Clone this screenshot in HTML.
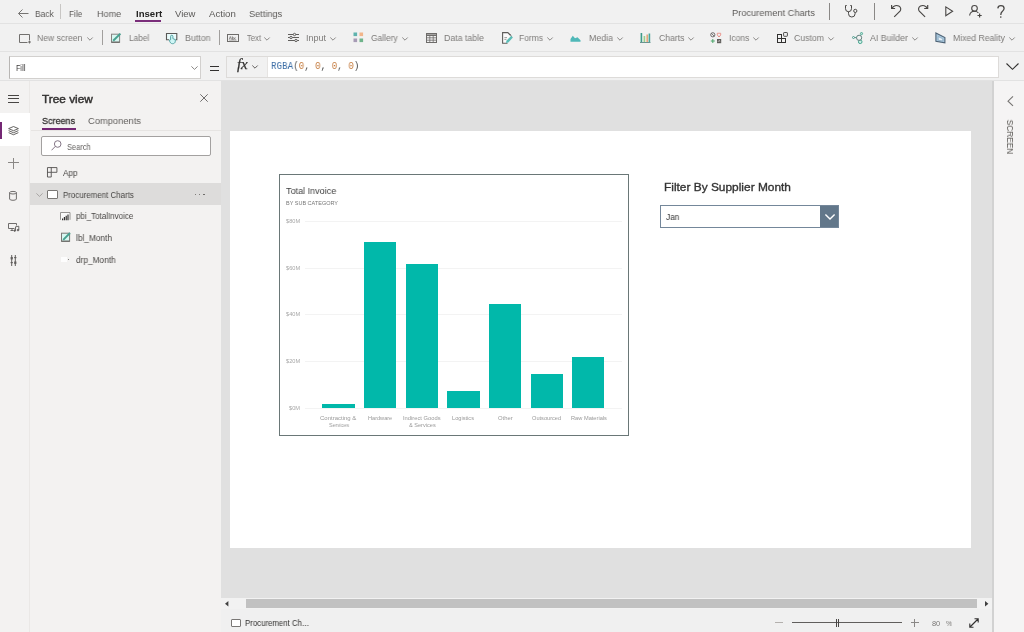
<!DOCTYPE html>
<html>
<head>
<meta charset="utf-8">
<title>Power Apps</title>
<style>
*{box-sizing:border-box;margin:0;padding:0}
html,body{width:1024px;height:632px;overflow:hidden;background:#f1f1f1;font-family:"Liberation Sans",sans-serif;color:#444}
.abs{position:absolute}
.t{position:absolute;white-space:nowrap;transform-origin:0 50%;will-change:transform;filter:blur(0.3px)}
#top{position:absolute;left:0;top:0;width:1024px;height:24px;background:#f1f1f1;border-bottom:1px solid #e2e2e2}
#tool{position:absolute;left:0;top:24px;width:1024px;height:28px;background:#f1f1f1;border-bottom:1px solid #e2e2e2}
#fbar{position:absolute;left:0;top:52px;width:1024px;height:29px;background:#f1f1f1;border-bottom:1px solid #e2e2e2}
#rail{position:absolute;left:0;top:81px;width:30px;height:551px;background:#f3f2f1;border-right:1px solid #eae8e6}
#tree{position:absolute;left:30px;top:81px;width:191px;height:551px;background:#f3f2f1}
#canvas{position:absolute;left:221px;top:81px;width:773px;height:517px;background:#e0e0e0}
#screen{position:absolute;left:230px;top:131px;width:741px;height:417px;background:#fff}
#right{position:absolute;left:994px;top:81px;width:30px;height:551px;background:#f5f4f4}
#hscroll{position:absolute;left:221px;top:598px;width:771px;height:11px;background:#f2f2f2}
#bottom{position:absolute;left:221px;top:609px;width:773px;height:23px;background:#f0f0f0}
#rb{position:absolute;left:992px;top:81px;width:2px;height:551px;background:#d2d2d2}
.vd{position:absolute;width:1px;background:#8a8886}
svg{position:absolute;overflow:visible;filter:blur(0.3px)}
.bar{position:absolute;background:#01b8aa}
.grid{position:absolute;left:305px;width:317px;height:1px;background:#f3f3f3}
.chev{fill:none;stroke:#8a8886;stroke-width:1}
</style>
</head>
<body>
<div id="top"></div>
<div id="tool"></div>
<div id="fbar"></div>
<div id="rail"></div>
<div id="tree"></div>
<div id="canvas"></div>
<div id="screen"></div>
<div id="right"></div>
<div id="hscroll"></div>
<div id="bottom"></div>
<div id="rb"></div>

<!-- ===== top bar icons ===== -->
<svg style="left:18px;top:9px" width="11" height="9" viewBox="0 0 11 9" fill="none" stroke="#767472" stroke-width="1"><path d="M0.5 4.5H10.5M4.5 0.5L0.5 4.5L4.5 8.5"/></svg>
<div class="vd" style="left:60px;top:4px;height:15px;background:#c8c6c4"></div>
<div class="abs" style="left:135.2px;top:20.2px;width:26px;height:1.7px;background:#7a2e7a"></div>
<div class="vd" style="left:828.5px;top:3px;height:17px"></div>
<div class="vd" style="left:873.6px;top:3px;height:17px"></div>
<!-- stethoscope -->
<svg style="left:844px;top:5px" width="14" height="13" viewBox="0 0 14 13" fill="none" stroke="#484644" stroke-width="1"><path d="M2.7 0.5H1.5V3.7a3 3 0 0 0 6 0V0.5H6.3"/><path d="M4.5 6.7V8.7a3.3 3.3 0 0 0 6.6 0V7.6"/><circle cx="11.3" cy="5.9" r="1.6"/></svg>
<!-- undo -->
<svg style="left:891px;top:5px" width="11" height="13" viewBox="0 0 11 13" fill="none" stroke="#484644" stroke-width="1.15"><path d="M0.6 0.1V3.5H4.1"/><path d="M0.9 3.2C2.5 0.7 5.5 -0.2 7.8 1C10 2.2 10.2 4.6 9 6.1L3.2 11.9"/></svg>
<!-- redo -->
<svg style="left:918px;top:5px" width="11" height="13" viewBox="0 0 11 13" fill="none" stroke="#484644" stroke-width="1.15"><path d="M9.7 0.1V3.5H6.2"/><path d="M9.4 3.2C7.8 0.7 4.8 -0.2 2.5 1C0.3 2.2 0.1 4.6 1.3 6.1L7.1 11.9"/></svg>
<!-- play -->
<svg style="left:945.3px;top:6px" width="9" height="11" viewBox="0 0 9 11" fill="none" stroke="#484644" stroke-width="1.1"><path d="M0.8 0.9L7.6 5.3L0.8 9.7Z"/></svg>
<!-- user+ -->
<svg style="left:969px;top:5px" width="13" height="12" viewBox="0 0 13 12" fill="none" stroke="#484644" stroke-width="1.1"><circle cx="5.5" cy="3.3" r="2.8"/><path d="M0.6 10.5C1 7.5 3 6.3 5.5 6.3C7.3 6.3 8.6 7 9.4 8"/><path d="M10.6 8.4V12.6M8.5 10.5H12.7" stroke-width="1.2"/></svg>
<!-- ? -->
<svg style="left:997.3px;top:4.9px" width="8" height="13.2" viewBox="0 0 8 13.2" fill="none" stroke="#484644" stroke-width="1.25"><path d="M0.8 3.4C1 1.7 2.2 0.7 3.9 0.7C5.8 0.7 7.1 1.9 7.1 3.5C7.1 5 6 5.8 5 6.8C4.1 7.7 3.8 8.4 3.8 9.9"/><circle cx="3.8" cy="12.1" r="0.8" fill="#484644" stroke="none"/></svg>

<!-- ===== toolbar icons ===== -->
<!-- new screen -->
<svg style="left:19px;top:34px" width="12" height="9" viewBox="0 0 12 9" fill="none" stroke="#72706e" stroke-width="1"><path d="M8.5 8.5H0.5V0.5H10.5V6"/><path d="M10.5 6.5V9.5M9 8H12"/></svg>
<svg style="left:87px;top:37.2px" width="6" height="4" viewBox="0 0 6 4"><path class="chev" d="M0.3 0.5L3 3.2L5.7 0.5"/></svg>
<div class="vd" style="left:102px;top:30px;height:15px;background:#a19f9d"></div>
<!-- label -->
<svg style="left:111px;top:33px" width="10" height="10" viewBox="0 0 10 10" fill="none"><rect x="0.5" y="1.2" width="8.1" height="8.1" fill="#d8f7f1" stroke="#858381" stroke-width="1"/><path d="M0.5 9.2H8.6" stroke="#6a6866" stroke-width="1.2"/><path d="M9.4 0.6L2.2 7.8" stroke="#47a08f" stroke-width="2"/></svg>
<!-- button -->
<svg style="left:166px;top:33px" width="12" height="11" viewBox="0 0 12 11" fill="none"><path d="M3 6.8H0.5V0.5H10.8V6.8H9.6" stroke="#5a5856" stroke-width="1.1" fill="#e9fbfb"/><path d="M4.6 3.4a1.15 1.15 0 0 1 2.3 0V5.6L9.3 6.6V8.2C9.3 9.9 8 10.7 6.5 10.7C5 10.7 3.9 9.6 3.3 7.2L4.6 6.8Z" stroke="#4a9c9c" stroke-width="0.9" fill="#cff6f6"/></svg>
<div class="vd" style="left:219px;top:30px;height:15px;background:#a19f9d"></div>
<!-- text -->
<svg style="left:227px;top:34px" width="12" height="8" viewBox="0 0 12 8" fill="none" stroke="#6e6c6a" stroke-width="1"><rect x="0.5" y="0.5" width="11" height="7"/><path d="M2.2 5.5L3.3 2.5L4.4 5.5M5.3 2.3V5.5M5.3 4.5a0.9 0.9 0 1 1 0 0.1M8.7 3.8a0.9 0.9 0 1 0 0 1.5" stroke-width="0.7"/><path d="M2.2 6.2H9.6" stroke-width="0.5"/></svg>
<svg style="left:264px;top:37.2px" width="6" height="4" viewBox="0 0 6 4"><path class="chev" d="M0.3 0.5L3 3.2L5.7 0.5"/></svg>
<!-- input -->
<svg style="left:288px;top:32px" width="11" height="11" viewBox="0 0 11 11" fill="none" stroke="#605e5c" stroke-width="1"><path d="M0 2.5H11M0 5.5H11M0 8.5H11"/><circle cx="6.5" cy="2.5" r="1.2" fill="#f1f1f1"/><circle cx="3" cy="5.5" r="1.2" fill="#f1f1f1"/><circle cx="8" cy="8.5" r="1.2" fill="#f1f1f1"/></svg>
<svg style="left:330px;top:37.2px" width="6" height="4" viewBox="0 0 6 4"><path class="chev" d="M0.3 0.5L3 3.2L5.7 0.5"/></svg>
<!-- gallery -->
<svg style="left:353px;top:32px" width="11" height="11" viewBox="0 0 11 11"><rect x="0.5" y="0.5" width="3.6" height="3.6" fill="#5fb3ae"/><rect x="6.5" y="0.5" width="3.6" height="3.6" fill="#f2b58a"/><rect x="0.5" y="6.5" width="3.6" height="3.6" fill="#a79bb5"/><rect x="6.5" y="6.5" width="3.6" height="3.6" fill="#6fb38a"/></svg>
<svg style="left:402px;top:37.2px" width="6" height="4" viewBox="0 0 6 4"><path class="chev" d="M0.3 0.5L3 3.2L5.7 0.5"/></svg>
<!-- data table -->
<svg style="left:426px;top:33px" width="11" height="10" viewBox="0 0 11 10" fill="none" stroke="#6e6c6a" stroke-width="1"><rect x="0.5" y="0.5" width="10" height="9"/><path d="M0.5 2.2H10.5" stroke-width="1.6"/><path d="M0.5 4.8H10.5M0.5 7.2H10.5M3.8 2V9.5M7.2 2V9.5" stroke-width="0.8"/></svg>
<!-- forms -->
<svg style="left:502px;top:32px" width="12" height="12" viewBox="0 0 12 12" fill="none"><path d="M5.5 11.2H0.6V0.6H5.8L8.2 3" stroke="#5f5d5b" stroke-width="1.1" fill="#fbfbfb"/><path d="M2.4 5.6H5M2.4 7.4H4.4" stroke="#8a8886" stroke-width="0.8"/><path d="M10.9 5.5L9.3 3.8L4.4 8.8L4 11.1L6.3 10.6Z" fill="#5bbdb7"/><path d="M7.8 2.4L9.4 3.8" stroke="#3b3a39" stroke-width="1"/></svg>
<svg style="left:547px;top:37.2px" width="6" height="4" viewBox="0 0 6 4"><path class="chev" d="M0.3 0.5L3 3.2L5.7 0.5"/></svg>
<!-- media -->
<svg style="left:570px;top:35px" width="11" height="7" viewBox="0 0 11 7"><path d="M0.5 6.8V4L2.8 0.8L5 3.2L7.5 2.2L10.5 5.2V6.8Z" fill="#4fb8b8"/></svg>
<svg style="left:617px;top:37.2px" width="6" height="4" viewBox="0 0 6 4"><path class="chev" d="M0.3 0.5L3 3.2L5.7 0.5"/></svg>
<!-- charts -->
<svg style="left:640px;top:33px" width="11" height="10" viewBox="0 0 11 10"><rect x="0.6" y="0" width="1.6" height="9" fill="#3d9a8a"/><rect x="3.6" y="3" width="1.6" height="6" fill="#9ccf8a"/><rect x="6.4" y="1.5" width="1.6" height="7.5" fill="#e6a77c"/><rect x="8.6" y="0.5" width="1.6" height="8.5" fill="#4aa59a"/><rect x="0" y="9" width="10.5" height="0.9" fill="#5b8a86"/></svg>
<svg style="left:688px;top:37.2px" width="6" height="4" viewBox="0 0 6 4"><path class="chev" d="M0.3 0.5L3 3.2L5.7 0.5"/></svg>
<!-- icons -->
<svg style="left:710px;top:32px" width="12" height="12" viewBox="0 0 12 12" fill="none"><circle cx="2.8" cy="2.8" r="2.1" stroke="#605e5c" stroke-width="0.9"/><path d="M1.3 1.3L4.3 4.3" stroke="#605e5c" stroke-width="0.8"/><path d="M9 5C7 3.5 6.8 1 8 1C8.6 1 9 1.6 9 1.6C9 1.6 9.4 1 10 1C11.2 1 11 3.5 9 5Z" stroke="#e8837a" stroke-width="0.9"/><path d="M2.8 7V11M0.8 9H4.8" stroke="#4aa56a" stroke-width="1"/><rect x="7" y="7" width="4.2" height="4.2" fill="#605e5c"/><path d="M8 9.8L9 8.5L10.2 9.5" stroke="#f3f2f1" stroke-width="0.7"/></svg>
<svg style="left:753px;top:37.2px" width="6" height="4" viewBox="0 0 6 4"><path class="chev" d="M0.3 0.5L3 3.2L5.7 0.5"/></svg>
<!-- custom -->
<svg style="left:777px;top:32px" width="11" height="11" viewBox="0 0 11 11" fill="none" stroke="#323130" stroke-width="1"><rect x="0.5" y="2.5" width="4" height="4"/><rect x="0.5" y="6.5" width="4" height="4"/><rect x="4.5" y="6.5" width="4" height="4"/><rect x="6.6" y="0.5" width="3.8" height="3.8" rx="0.6" stroke-width="0.85"/></svg>
<svg style="left:828px;top:37.2px" width="6" height="4" viewBox="0 0 6 4"><path class="chev" d="M0.3 0.5L3 3.2L5.7 0.5"/></svg>
<!-- AI builder -->
<svg style="left:852px;top:32px" width="12" height="12" viewBox="0 0 12 12" fill="none" stroke-width="1"><circle cx="1.5" cy="5.5" r="1" stroke="#4d9a8c"/><path d="M2.5 5.6H4.4" stroke="#4d9a8c"/><circle cx="9.5" cy="1.6" r="1.1" stroke="#4fa993" fill="#bfe6dc"/><circle cx="8.2" cy="9.8" r="1.8" stroke="#45a58f" fill="#cdeee6"/><circle cx="7.1" cy="5.8" r="2.6" stroke="#5f7f7c" fill="#f3f2f1" fill-opacity="0.6"/></svg>
<svg style="left:912px;top:37.2px" width="6" height="4" viewBox="0 0 6 4"><path class="chev" d="M0.3 0.5L3 3.2L5.7 0.5"/></svg>
<!-- mixed reality -->
<svg style="left:935px;top:32px" width="11" height="12" viewBox="0 0 11 12" fill="none" stroke="#4d6275" stroke-width="1.1"><path d="M0.9 0.9L9.9 5.5V10.9L0.9 9.3Z" fill="#a9c7dc"/><path d="M3.2 4.6L7.8 6.8V9L3.2 8.2Z" fill="#e6f0f7" stroke="#7fa3bd" stroke-width="0.7"/></svg>
<svg style="left:1009px;top:37.2px" width="6" height="4" viewBox="0 0 6 4"><path class="chev" d="M0.3 0.5L3 3.2L5.7 0.5"/></svg>

<!-- ===== formula bar ===== -->
<div class="abs" style="left:9px;top:56px;width:192px;height:22.6px;background:#fff;border:1px solid #d2d0ce;border-left-color:#b8b6b4"></div>
<svg style="left:191px;top:66px" width="7" height="4" viewBox="0 0 7 4"><path d="M0.4 0.4L3.5 3.4L6.6 0.4" fill="none" stroke="#8a8886" stroke-width="1"/></svg>
<div class="abs" style="left:209.5px;top:65.5px;width:9px;height:1.3px;background:#323130"></div>
<div class="abs" style="left:209.5px;top:69.5px;width:9px;height:1.3px;background:#323130"></div>
<div class="abs" style="left:226px;top:56px;width:773px;height:22px;background:#fff;border:1px solid #dddbd9"></div>
<div class="abs" style="left:227px;top:57px;width:41px;height:20px;background:#f1f1f1;border-right:1px solid #e6e4e2"></div>
<div class="t" style="left:237px;top:56.3px;font-family:'Liberation Serif',serif;font-style:italic;font-size:15px;line-height:17px;color:#323130;letter-spacing:-0.2px;-webkit-text-stroke:0.25px #323130">fx</div>
<svg style="left:251.5px;top:65px" width="6" height="4" viewBox="0 0 6 4"><path d="M0.3 0.5L3 3.2L5.7 0.5" fill="none" stroke="#605e5c" stroke-width="1"/></svg>
<div class="t" style="left:271px;top:60.3px;font-family:'Liberation Mono',monospace;font-size:10.8px;line-height:13px;color:#555;transform:scaleX(0.852)"><span style="color:#3c6ea6">RGBA</span>(<span style="color:#c47a3c">0</span>, <span style="color:#c47a3c">0</span>, <span style="color:#c47a3c">0</span>, <span style="color:#c47a3c">0</span>)</div>
<svg style="left:1006px;top:63px" width="13" height="7" viewBox="0 0 13 7"><path d="M0.5 0.5L6.5 6.3L12.5 0.5" fill="none" stroke="#323130" stroke-width="1.1"/></svg>

<!-- ===== left rail ===== -->
<div class="abs" style="left:8px;top:95.3px;width:11px;height:1px;background:#484644"></div>
<div class="abs" style="left:8px;top:98.4px;width:11px;height:1px;background:#484644"></div>
<div class="abs" style="left:8px;top:101.5px;width:11px;height:1px;background:#484644"></div>
<div class="abs" style="left:0;top:113px;width:30px;height:33px;background:#fff"></div>
<div class="abs" style="left:0;top:122px;width:2px;height:17px;background:#742774"></div>
<svg style="left:8px;top:125.7px" width="11" height="9.6" viewBox="0 0 11 11" preserveAspectRatio="none" fill="none" stroke="#484644" stroke-width="0.9"><path d="M5.5 0.6L10.4 3L5.5 5.4L0.6 3Z"/><path d="M0.6 5.3L5.5 7.7L10.4 5.3M0.6 7.6L5.5 10L10.4 7.6"/></svg>
<div class="abs" style="left:8px;top:162.3px;width:11px;height:1px;background:#8a8886"></div>
<div class="abs" style="left:13px;top:157.5px;width:1px;height:11px;background:#8a8886"></div>
<svg style="left:9px;top:190.5px" width="8" height="10" viewBox="0 0 8 10" fill="none" stroke="#605e5c" stroke-width="0.9"><ellipse cx="4" cy="1.7" rx="3.4" ry="1.3"/><path d="M0.6 1.7V8a3.4 1.3 0 0 0 6.8 0V1.7"/></svg>
<svg style="left:8px;top:223px" width="12" height="9" viewBox="0 0 12 9" fill="none" stroke="#605e5c" stroke-width="0.9"><path d="M6.5 5.5H0.5V0.5H8.5V2.5"/><path d="M2.5 7.5H5.5M4 5.5V7.5"/><path d="M7.5 7.5V3.8L10.8 3.2V7"/><circle cx="6.7" cy="7.6" r="0.8" fill="#605e5c"/><circle cx="10" cy="7.1" r="0.8" fill="#605e5c"/></svg>
<svg style="left:9.5px;top:255px" width="7" height="11" viewBox="0 0 7 11" fill="none" stroke="#605e5c" stroke-width="1"><path d="M1.7 0V11M5.3 0V11"/><rect x="0.6" y="2" width="2.2" height="2.4" fill="#605e5c" stroke="none"/><rect x="4.2" y="6.5" width="2.2" height="2.4" fill="#605e5c" stroke="none"/><rect x="0.6" y="7" width="2.2" height="1.2" fill="#605e5c" stroke="none"/><rect x="4.2" y="2" width="2.2" height="1.2" fill="#605e5c" stroke="none"/></svg>

<!-- ===== tree panel ===== -->
<svg style="left:200px;top:94px" width="8" height="8" viewBox="0 0 8 8"><path d="M0.3 0.3L7.7 7.7M7.7 0.3L0.3 7.7" stroke="#605e5c" stroke-width="0.9"/></svg>
<div class="abs" style="left:31px;top:130px;width:190px;height:1px;background:#e6e4e2"></div>
<div class="abs" style="left:42px;top:128px;width:33.5px;height:2px;background:#742774"></div>
<div class="abs" style="left:40.8px;top:136px;width:169.8px;height:20px;background:#fff;border:1px solid #a3a1a0;border-radius:2px"></div>
<svg style="left:50.5px;top:140px" width="11" height="11" viewBox="0 0 11 11" fill="none" stroke="#7d6f80" stroke-width="0.95"><circle cx="6.7" cy="4" r="3.3"/><path d="M4.3 6.4L0.5 10.3"/></svg>
<svg style="left:46.8px;top:167.2px" width="10.4" height="10.6" viewBox="0 0 11 11" fill="none" stroke="#484644" stroke-width="0.9"><path d="M0.5 0.5H10.5V5.5H4.5V10.5H0.5Z"/><path d="M4.5 0.5V5.5M0.5 5.5H4.5"/></svg>
<div class="abs" style="left:30px;top:183px;width:191px;height:21.5px;background:#dddcdb"></div>
<svg style="left:35.5px;top:192.5px" width="7" height="4" viewBox="0 0 7 4"><path d="M0.4 0.4L3.5 3.4L6.6 0.4" fill="none" stroke="#a19f9d" stroke-width="0.9"/></svg>
<div class="abs" style="left:47px;top:190px;width:10.5px;height:9px;background:#fff;border:1px solid #797775;border-radius:1px"></div>
<div class="abs" style="left:194.5px;top:193.5px;width:1.8px;height:1.8px;background:#605e5c;border-radius:1px"></div>
<div class="abs" style="left:198.7px;top:193.5px;width:1.8px;height:1.8px;background:#605e5c;border-radius:1px"></div>
<div class="abs" style="left:202.9px;top:193.5px;width:1.8px;height:1.8px;background:#605e5c;border-radius:1px"></div>
<!-- pbi icon -->
<svg style="left:60.3px;top:212px" width="10.5" height="9" viewBox="0 0 10.5 9" fill="none"><path d="M0.5 7.8V0.5H10V7.8" stroke="#8a8886" stroke-width="0.9" fill="#fafafa"/><path d="M2.6 8.3V6.6M4.4 8.3V5M6.2 8.3V3.8M8 8.3V2.4" stroke="#2b2a29" stroke-width="1.15"/></svg>
<!-- lbl icon -->
<svg style="left:61.1px;top:232.1px" width="10" height="10" viewBox="0 0 10 10" fill="none"><rect x="0.5" y="1.2" width="8.1" height="8.1" fill="#d8f7f1" stroke="#7a7876" stroke-width="1"/><path d="M0.5 9.2H8.6" stroke="#6a6866" stroke-width="1.1"/><path d="M9 1L2.2 7.8" stroke="#47a08f" stroke-width="1.9"/></svg>
<!-- drp icon -->
<div class="abs" style="left:60.5px;top:256.7px;width:6px;height:5.8px;background:#fdfdfd"></div>
<div class="abs" style="left:67.5px;top:259px;width:1.3px;height:1.3px;background:#605e5c;border-radius:1px"></div>

<!-- ===== right panel ===== -->
<svg style="left:1007px;top:95.5px" width="7" height="10.4" viewBox="0 0 7 11" preserveAspectRatio="none"><path d="M6 0.5L1 5.5L6 10.5" fill="none" stroke="#767472" stroke-width="1.1"/></svg>
<div class="t" style="left:1010px;top:136.5px;width:0;height:0;overflow:visible"><div style="position:absolute;white-space:nowrap;font-size:8.3px;line-height:10px;color:#55534f;letter-spacing:0px;transform:translate(-50%,-50%) rotate(90deg)">SCREEN</div></div>

<!-- ===== scroll + bottom bar ===== -->
<div class="abs" style="left:246px;top:599px;width:731px;height:9px;background:#c1c1c1"></div>
<svg style="left:224.6px;top:601px" width="3.4" height="5.6" viewBox="0 0 4 6" preserveAspectRatio="none"><path d="M4 0L0 3L4 6Z" fill="#404040"/></svg>
<svg style="left:985px;top:601px" width="3.4" height="5.6" viewBox="0 0 4 6" preserveAspectRatio="none"><path d="M0 0L4 3L0 6Z" fill="#404040"/></svg>
<div class="abs" style="left:231px;top:618.5px;width:10px;height:8px;background:#fff;border:1px solid #797775;border-radius:1px"></div>
<div class="abs" style="left:775px;top:622.2px;width:8px;height:1px;background:#b3b0ad"></div>
<div class="abs" style="left:792px;top:622px;width:109.5px;height:1.4px;background:#605e5c"></div>
<div class="abs" style="left:835.8px;top:618.5px;width:1px;height:8.5px;background:#484644"></div>
<div class="abs" style="left:837.6px;top:618.5px;width:1px;height:8.5px;background:#484644"></div>
<div class="abs" style="left:910.5px;top:622.2px;width:8px;height:1px;background:#8a8886"></div>
<div class="abs" style="left:914px;top:618.7px;width:1px;height:8px;background:#8a8886"></div>
<svg style="left:969px;top:618px" width="10" height="10" viewBox="0 0 10 10" fill="none" stroke="#323130" stroke-width="1.1"><path d="M1 9L9 1M5.5 0.8H9.2V4.5M0.8 5.5V9.2H4.5"/></svg>

<!-- ===== screen content: chart ===== -->
<div class="abs" style="left:279px;top:174px;width:349.5px;height:261.5px;background:#fff;border:1px solid #6a7777"></div>
<div class="grid" style="top:221px"></div>
<div class="grid" style="top:267.5px"></div>
<div class="grid" style="top:314px"></div>
<div class="grid" style="top:361px"></div>
<div class="grid" style="top:407.5px"></div>
<div class="bar" style="left:322.1px;width:32.5px;top:404.2px;height:3.5px"></div>
<div class="bar" style="left:364.2px;width:32.2px;top:242.1px;height:165.6px"></div>
<div class="bar" style="left:405.5px;width:32.2px;top:263.5px;height:144.2px"></div>
<div class="bar" style="left:447.2px;width:32.4px;top:390.6px;height:17.1px"></div>
<div class="bar" style="left:488.8px;width:32.4px;top:304px;height:103.7px"></div>
<div class="bar" style="left:530.5px;width:32.5px;top:373.6px;height:34.1px"></div>
<div class="bar" style="left:572px;width:32.4px;top:357.2px;height:50.5px"></div>

<!-- ===== dropdown ===== -->
<div class="abs" style="left:660px;top:205px;width:179px;height:22.5px;background:#fff;border:1px solid #74879a"></div>
<div class="abs" style="left:820px;top:206px;width:18px;height:20.5px;background:#62778a"></div>
<svg style="left:824.5px;top:214px" width="10" height="6" viewBox="0 0 10 6"><path d="M0.4 0.5L5 5.1L9.6 0.5" fill="none" stroke="#fff" stroke-width="1.4"/></svg>

<div class="t" style="left:34.5px;top:7.5px;font-size:9.5px;line-height:12px;color:#5c5a58;transform:scaleX(0.890);">Back</div>
<div class="t" style="left:68.7px;top:7.5px;font-size:9.5px;line-height:12px;color:#5c5a58;transform:scaleX(0.869);">File</div>
<div class="t" style="left:97.0px;top:7.5px;font-size:9.5px;line-height:12px;color:#5c5a58;transform:scaleX(0.955);">Home</div>
<div class="t" style="left:135.5px;top:7.5px;font-size:9.6px;line-height:12px;color:#252423;transform:scaleX(0.983);font-weight:bold;">Insert</div>
<div class="t" style="left:175.0px;top:7.5px;font-size:9.5px;line-height:12px;color:#5c5a58;transform:scaleX(0.979);">View</div>
<div class="t" style="left:208.7px;top:7.5px;font-size:9.5px;line-height:12px;color:#5c5a58;transform:scaleX(1.015);">Action</div>
<div class="t" style="left:249.0px;top:7.5px;font-size:9.5px;line-height:12px;color:#5c5a58;transform:scaleX(0.967);">Settings</div>
<div class="t" style="left:732.0px;top:7.0px;font-size:9.5px;line-height:12px;color:#5c5a58;transform:scaleX(0.976);">Procurement Charts</div>
<div class="t" style="left:36.6px;top:33.0px;font-size:9.0px;line-height:11px;color:#7d7b79;transform:scaleX(0.955);">New screen</div>
<div class="t" style="left:128.7px;top:33.0px;font-size:9.0px;line-height:11px;color:#7d7b79;transform:scaleX(0.921);">Label</div>
<div class="t" style="left:184.5px;top:33.0px;font-size:9.0px;line-height:11px;color:#7d7b79;transform:scaleX(0.980);">Button</div>
<div class="t" style="left:246.5px;top:33.0px;font-size:9.0px;line-height:11px;color:#7d7b79;transform:scaleX(0.848);">Text</div>
<div class="t" style="left:306.0px;top:33.0px;font-size:9.0px;line-height:11px;color:#7d7b79;transform:scaleX(0.998);">Input</div>
<div class="t" style="left:371.0px;top:33.0px;font-size:9.0px;line-height:11px;color:#7d7b79;transform:scaleX(0.936);">Gallery</div>
<div class="t" style="left:444.0px;top:33.0px;font-size:9.0px;line-height:11px;color:#7d7b79;transform:scaleX(0.975);">Data table</div>
<div class="t" style="left:519.0px;top:33.0px;font-size:9.0px;line-height:11px;color:#7d7b79;transform:scaleX(0.941);">Forms</div>
<div class="t" style="left:589.0px;top:33.0px;font-size:9.0px;line-height:11px;color:#7d7b79;transform:scaleX(0.979);">Media</div>
<div class="t" style="left:658.5px;top:33.0px;font-size:9.0px;line-height:11px;color:#7d7b79;transform:scaleX(0.962);">Charts</div>
<div class="t" style="left:728.7px;top:33.0px;font-size:9.0px;line-height:11px;color:#7d7b79;transform:scaleX(0.944);">Icons</div>
<div class="t" style="left:794.0px;top:33.0px;font-size:9.0px;line-height:11px;color:#7d7b79;transform:scaleX(0.967);">Custom</div>
<div class="t" style="left:870.0px;top:33.0px;font-size:9.0px;line-height:11px;color:#7d7b79;transform:scaleX(0.974);">AI Builder</div>
<div class="t" style="left:953.0px;top:33.0px;font-size:9.0px;line-height:11px;color:#7d7b79;transform:scaleX(0.962);">Mixed Reality</div>
<div class="t" style="left:16.0px;top:62.9px;font-size:8.4px;line-height:11px;color:#3b3a39;transform:scaleX(0.888);">Fill</div>
<div class="t" style="left:42.4px;top:92.1px;font-size:11.2px;line-height:14px;color:#323130;transform:scaleX(1.057);-webkit-text-stroke:0.45px #323130;">Tree view</div>
<div class="t" style="left:42.4px;top:115.0px;font-size:9.6px;line-height:12px;color:#323130;transform:scaleX(0.937);-webkit-text-stroke:0.3px #323130;">Screens</div>
<div class="t" style="left:88.4px;top:115.0px;font-size:9.6px;line-height:12px;color:#605e5c;transform:scaleX(0.974);">Components</div>
<div class="t" style="left:67.3px;top:141.7px;font-size:8.4px;line-height:11px;color:#605e5c;transform:scaleX(0.889);">Search</div>
<div class="t" style="left:62.5px;top:167.8px;font-size:8.6px;line-height:11px;color:#484644;transform:scaleX(0.948);">App</div>
<div class="t" style="left:62.5px;top:190.0px;font-size:8.6px;line-height:11px;color:#484644;transform:scaleX(0.922);">Procurement Charts</div>
<div class="t" style="left:76.0px;top:210.5px;font-size:8.6px;line-height:11px;color:#484644;transform:scaleX(0.931);">pbi_TotalInvoice</div>
<div class="t" style="left:76.0px;top:232.5px;font-size:8.6px;line-height:11px;color:#484644;transform:scaleX(0.966);">lbl_Month</div>
<div class="t" style="left:76.0px;top:254.5px;font-size:8.6px;line-height:11px;color:#484644;transform:scaleX(0.964);">drp_Month</div>
<div class="t" style="left:245.0px;top:617.5px;font-size:8.4px;line-height:11px;color:#323130;transform:scaleX(0.934);">Procurement Ch...</div>
<div class="t" style="left:932.2px;top:618.5px;font-size:7.4px;line-height:9px;color:#797775;transform:scaleX(0.947);">80</div>
<div class="t" style="left:946.0px;top:618.5px;font-size:7.4px;line-height:9px;color:#797775;transform:scaleX(0.912);">%</div>
<div class="t" style="left:285.9px;top:185.0px;font-size:9.3px;line-height:12px;color:#404040;transform:scaleX(0.973);">Total Invoice</div>
<div class="t" style="left:285.9px;top:200.0px;font-size:5.5px;line-height:7px;color:#777;transform:scaleX(1.001);">BY SUB CATEGORY</div>
<div class="t" style="left:285.9px;top:218.2px;font-size:5px;line-height:6px;color:#a6a6a6;transform:scaleX(1.127);">$80M</div>
<div class="t" style="left:285.9px;top:264.9px;font-size:5px;line-height:6px;color:#a6a6a6;transform:scaleX(1.127);">$60M</div>
<div class="t" style="left:285.9px;top:311.3px;font-size:5px;line-height:6px;color:#a6a6a6;transform:scaleX(1.127);">$40M</div>
<div class="t" style="left:285.9px;top:358.4px;font-size:5px;line-height:6px;color:#a6a6a6;transform:scaleX(1.127);">$20M</div>
<div class="t" style="left:289.0px;top:404.7px;font-size:5px;line-height:6px;color:#a6a6a6;transform:scaleX(1.130);">$0M</div>
<div class="t" style="left:320.4px;top:414.8px;font-size:5.5px;line-height:7px;color:#999;transform:scaleX(1.089);">Contracting &amp;</div>
<div class="t" style="left:328.6px;top:421.8px;font-size:5.5px;line-height:7px;color:#999;transform:scaleX(0.958);">Services</div>
<div class="t" style="left:368.2px;top:414.8px;font-size:5.5px;line-height:7px;color:#999;transform:scaleX(1.015);">Hardware</div>
<div class="t" style="left:403.0px;top:414.8px;font-size:5.5px;line-height:7px;color:#999;transform:scaleX(1.051);">Indirect Goods</div>
<div class="t" style="left:408.6px;top:421.8px;font-size:5.5px;line-height:7px;color:#999;transform:scaleX(1.015);">&amp; Services</div>
<div class="t" style="left:452.0px;top:414.8px;font-size:5.5px;line-height:7px;color:#999;transform:scaleX(1.028);">Logistics</div>
<div class="t" style="left:498.0px;top:414.8px;font-size:5.5px;line-height:7px;color:#999;transform:scaleX(1.068);">Other</div>
<div class="t" style="left:532.2px;top:414.8px;font-size:5.5px;line-height:7px;color:#999;transform:scaleX(1.023);">Outsourced</div>
<div class="t" style="left:571.0px;top:414.8px;font-size:5.5px;line-height:7px;color:#999;transform:scaleX(1.030);">Raw Materials</div>
<div class="t" style="left:663.7px;top:178.6px;font-size:11.7px;line-height:15px;color:#333;transform:scaleX(1.018);-webkit-text-stroke:0.35px #333;">Filter By Supplier Month</div>
<div class="t" style="left:666.0px;top:211.8px;font-size:8.8px;line-height:11px;color:#333;transform:scaleX(0.937);">Jan</div>
</body>
</html>
